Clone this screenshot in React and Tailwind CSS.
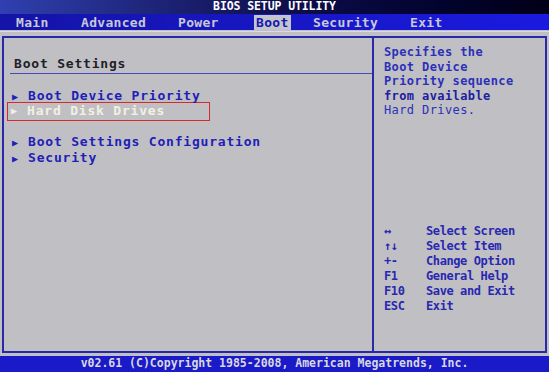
const MENU = [
  { label: 'Main', x: 'w-[81px] pl-[16px]' },
  { label: 'Advanced', x: 'w-[97px]' },
  { label: 'Power', x: 'w-[78px]' },
  { label: 'Boot', x: 'w-[57px]', active: true },
  { label: 'Security', x: 'w-[97px]' },
  { label: 'Exit', x: '' },
]

const KEYS = [
  ['↔', 'Select Screen'],
  ['↑↓', 'Select Item'],
  ['+-', 'Change Option'],
  ['F1', 'General Help'],
  ['F10', 'Save and Exit'],
  ['ESC', 'Exit'],
]

const mono = "font-['DejaVu_Sans_Mono',monospace]"

function Item({ label, selected }) {
  if (selected) {
    return (
      <div className="h-[19px] -mt-[2px] -mb-[1px] -ml-[5px] w-[203px] bg-[#d42a2a] p-[1px]">
        <div className="h-full bg-[#c0c0c4] flex items-center pb-[2px] pl-[3px] text-[#f2f0e2]">
          <span className="text-[10px] w-[16px]">▶</span>
          <span>{label}</span>
        </div>
      </div>
    )
  }
  return (
    <div className="flex items-center h-[16px] text-[#2020b8]">
      <span className="text-[10px] w-[16px]">▶</span>
      <span>{label}</span>
    </div>
  )
}

export default function App() {
  return (
    <div className={`w-[549px] h-[372px] bg-[#c0c0c4] flex flex-col overflow-hidden font-bold ${mono}`}>
      {/* title */}
      <div className="h-[14px] bg-gradient-to-r from-[#3040b0] via-[#101050] to-[#000018] flex items-center justify-center text-white text-[11.5px] tracking-[-0.1px] leading-none">
        <span>BIOS SETUP UTILITY</span>
      </div>
      {/* menu */}
      <div className="h-[16px] bg-gradient-to-r from-[#1414a8] to-[#1a1ae0] flex items-center text-[13px] tracking-[0.3px] leading-none">
        {MENU.map(m => (
          <div key={m.label} className={`${m.x} flex items-center`}>
            <span className={m.active ? 'bg-[#c4c4cc] text-[#1818b0] h-[15px] flex items-center px-[2px] -ml-[2px]' : 'text-[#c8c8d8]'}>{m.label}</span>
          </div>
        ))}
      </div>
      <div className="h-[1px] mt-[1px] bg-[#d8d8f0]" />

      {/* panels */}
      <div className="mt-[4px] mx-[2px] h-[317px] border-2 border-[#2828a8] flex">
        <div className="w-[370px] border-r-2 border-[#2828a8] pt-[15px] text-[13px] tracking-[0.8px]">
          <div className="pl-[10px] text-[#202028] h-[20px] flex items-end">Boot Settings</div>
          <div className="ml-[6px] h-[1px] bg-[#4848b8]" />
          <div className="pl-[8px] mt-[14px]">
            <Item label="Boot Device Priority" />
            <Item label="Hard Disk Drives" selected />
            <div className="h-[14px]" />
            <Item label="Boot Settings Configuration" />
            <Item label="Security" />
          </div>
        </div>
        <div className="flex-1 flex flex-col pl-[10px] pt-[7px] text-[12px] tracking-[0.4px] leading-[14.6px] text-[#2c30b8]">
          <div>Specifies the</div>
          <div>Boot Device</div>
          <div>Priority sequence</div>
          <div className="text-[#2020a0]">from available</div>
          <div className="font-normal">Hard Drives.</div>
          <div className="mt-auto mb-[37px] text-[12px] tracking-[-0.4px] leading-[15px] text-[#2828b0]">
            {KEYS.map(([k, d]) => (
              <div key={d} className="flex">
                <span className="w-[42px]">{k}</span>
                <span>{d}</span>
              </div>
            ))}
          </div>
        </div>
      </div>

      {/* footer */}
      <div className="mt-[3px] flex-1 bg-[#1a1ac8] flex items-center justify-center text-[#d8d8e0] text-[11.5px] leading-none pb-[1px]">
        v02.61 (C)Copyright 1985-2008, American Megatrends, Inc.
      </div>
    </div>
  )
}
